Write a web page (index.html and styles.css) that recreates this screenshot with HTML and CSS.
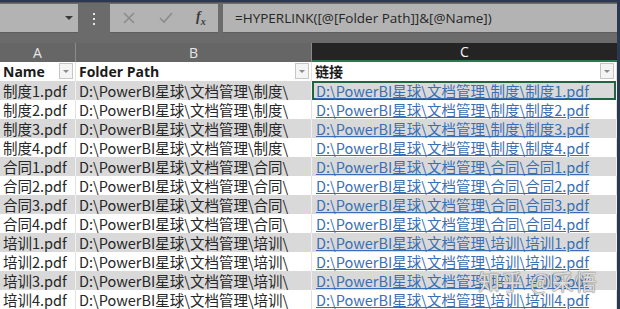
FILE: index.html
```html
<!DOCTYPE html>
<html lang="zh-CN">
<head>
    <meta charset="UTF-8">
    <title>HYPERLINK 文档链接</title>
    <link rel="stylesheet" href="styles.css">
</head>
<body>
    <div class="sheet">
        <div class="window-edge"></div>

        <div class="formula-bar">
            <div class="name-box"><span class="caret"></span></div>
            <div class="grip"><i></i><i></i><i></i></div>
            <div class="fx-buttons">
                <svg class="btn-icon" width="14" height="14" viewBox="0 0 14 14"><path d="M2 2 L12 12 M12 2 L2 12" stroke="#8c8c8c" stroke-width="1.6" fill="none"/></svg>
                <svg class="btn-icon" width="16" height="14" viewBox="0 0 16 14"><path d="M2 7 L6 11 L14 2" stroke="#8c8c8c" stroke-width="1.6" fill="none"/></svg>
                <span class="fx">f<sub>x</sub></span>
            </div>
            <div class="formula-input">=HYPERLINK([@[Folder Path]]&amp;[@Name])</div>
        </div>

        <div class="col-heads">
            <div class="col-head">A</div>
            <div class="col-head">B</div>
            <div class="col-head active">C</div>
        </div>

        <div class="table">
            <div class="row head">
                <div class="cell">Name<span class="filter"></span></div>
                <div class="cell">Folder Path<span class="filter"></span></div>
                <div class="cell">链接<span class="filter"></span></div>
            </div>
            <div class="row band">
                <div class="cell">制度1.pdf</div>
                <div class="cell">D:\PowerBI星球\文档管理\制度\</div>
                <div class="cell link selected"><a>D:\PowerBI星球\文档管理\制度\制度1.pdf</a></div>
            </div>
            <div class="row">
                <div class="cell">制度2.pdf</div>
                <div class="cell">D:\PowerBI星球\文档管理\制度\</div>
                <div class="cell link"><a>D:\PowerBI星球\文档管理\制度\制度2.pdf</a></div>
            </div>
            <div class="row band">
                <div class="cell">制度3.pdf</div>
                <div class="cell">D:\PowerBI星球\文档管理\制度\</div>
                <div class="cell link"><a>D:\PowerBI星球\文档管理\制度\制度3.pdf</a></div>
            </div>
            <div class="row">
                <div class="cell">制度4.pdf</div>
                <div class="cell">D:\PowerBI星球\文档管理\制度\</div>
                <div class="cell link"><a>D:\PowerBI星球\文档管理\制度\制度4.pdf</a></div>
            </div>
            <div class="row band">
                <div class="cell">合同1.pdf</div>
                <div class="cell">D:\PowerBI星球\文档管理\合同\</div>
                <div class="cell link"><a>D:\PowerBI星球\文档管理\合同\合同1.pdf</a></div>
            </div>
            <div class="row">
                <div class="cell">合同2.pdf</div>
                <div class="cell">D:\PowerBI星球\文档管理\合同\</div>
                <div class="cell link"><a>D:\PowerBI星球\文档管理\合同\合同2.pdf</a></div>
            </div>
            <div class="row band">
                <div class="cell">合同3.pdf</div>
                <div class="cell">D:\PowerBI星球\文档管理\合同\</div>
                <div class="cell link"><a>D:\PowerBI星球\文档管理\合同\合同3.pdf</a></div>
            </div>
            <div class="row">
                <div class="cell">合同4.pdf</div>
                <div class="cell">D:\PowerBI星球\文档管理\合同\</div>
                <div class="cell link"><a>D:\PowerBI星球\文档管理\合同\合同4.pdf</a></div>
            </div>
            <div class="row band">
                <div class="cell">培训1.pdf</div>
                <div class="cell">D:\PowerBI星球\文档管理\培训\</div>
                <div class="cell link"><a>D:\PowerBI星球\文档管理\培训\培训1.pdf</a></div>
            </div>
            <div class="row">
                <div class="cell">培训2.pdf</div>
                <div class="cell">D:\PowerBI星球\文档管理\培训\</div>
                <div class="cell link"><a>D:\PowerBI星球\文档管理\培训\培训2.pdf</a></div>
            </div>
            <div class="row band">
                <div class="cell">培训3.pdf</div>
                <div class="cell">D:\PowerBI星球\文档管理\培训\</div>
                <div class="cell link"><a>D:\PowerBI星球\文档管理\培训\培训3.pdf</a></div>
            </div>
            <div class="row">
                <div class="cell">培训4.pdf</div>
                <div class="cell">D:\PowerBI星球\文档管理\培训\</div>
                <div class="cell link"><a>D:\PowerBI星球\文档管理\培训\培训4.pdf</a></div>
            </div>
        </div>

        <div class="watermark">知乎 @采悟</div>
    </div>
</body>
</html>
```

FILE: styles.css
```css
body {
    margin: 0;
    background: #ffffff;
    font-family: "Noto Sans CJK SC", "Noto Sans", sans-serif;
}

.sheet {
    position: relative;
    width: 620px;
    height: 309px;
    overflow: hidden;
    background: #ffffff;
    border-right: 3px solid #2b3950;
    box-sizing: border-box;
}

.window-edge {
    height: 2px;
    background: #2b3950;
    border-bottom: 1px solid #5a5550;
}

.formula-bar {
    display: flex;
    align-items: flex-start;
    height: 40px;
    padding-top: 1px;
    box-sizing: border-box;
    background: #6b6b6b;
}

.name-box,
.fx-buttons,
.formula-input {
    height: 29px;
    box-sizing: border-box;
    background: #b3b3b3;
    border-bottom: 1px solid #5e5e5e;
}

.name-box {
    width: 78px;
    display: flex;
    align-items: center;
    justify-content: flex-end;
    padding-right: 5px;
}

.caret {
    width: 0;
    height: 0;
    border-left: 4px solid transparent;
    border-right: 4px solid transparent;
    border-top: 4px solid #3a3a3a;
}

.grip {
    width: 32px;
    height: 29px;
    display: flex;
    flex-direction: column;
    align-items: center;
    justify-content: center;
    gap: 3px;
}

.grip i {
    width: 2px;
    height: 2px;
    background: #e6e6e6;
}

.fx-buttons {
    width: 108px;
    display: flex;
    align-items: center;
    gap: 22px;
    padding-left: 12px;
}

.fx {
    font-family: "Liberation Serif", serif;
    font-style: italic;
    font-weight: bold;
    font-size: 14px;
    color: #3a3a3a;
}

.fx sub {
    font-size: 10px;
}

.formula-input {
    flex: 1;
    margin-left: 5px;
    padding-left: 12px;
    font-family: "Open Sans", sans-serif;
    font-size: 13.5px;
    line-height: 28px;
    color: #262626;
}

.col-heads {
    display: grid;
    grid-template-columns: 76px 236px 1fr;
    height: 19px;
    background: #666666;
}

.col-head {
    text-align: center;
    font-family: "Open Sans", sans-serif;
    font-size: 14px;
    line-height: 19px;
    color: #e6e6e6;
    border-right: 1px solid #8a8a8a;
}

.col-head.active {
    background: #242424;
    color: #f5f5f5;
    border-bottom: 2px solid #2a7a4f;
    border-right: none;
    line-height: 17px;
}

.row {
    display: grid;
    grid-template-columns: 76px 236px 1fr;
    height: 19px;
}

.row.band {
    background: #d9d9d9;
}

.cell {
    position: relative;
    padding-left: 3px;
    font-size: 14.5px;
    line-height: 19px;
    color: #262626;
    white-space: nowrap;
    overflow: hidden;
    border-right: 1px solid #e2e2e2;
}

.row.band .cell {
    border-right-color: #f0f0f0;
}

.row.head .cell {
    font-family: "Open Sans", "Noto Sans CJK SC", sans-serif;
    font-weight: bold;
    font-size: 14px;
    color: #1a1a1a;
}

.filter {
    position: absolute;
    right: 2px;
    top: 1px;
    width: 14px;
    height: 16px;
    box-sizing: border-box;
    background: #f4f4f4;
    border: 1px solid #c6c6c6;
}

.filter::after {
    content: "";
    position: absolute;
    left: 3px;
    top: 6px;
    border-left: 3px solid transparent;
    border-right: 3px solid transparent;
    border-top: 3px solid #8a8a8a;
}

.cell.link {
    padding-left: 4px;
}

.cell.link a {
    color: #3a6fb4;
    text-decoration: underline;
}

.cell.selected {
    box-shadow: inset 0 0 0 2px #22643f;
}

.watermark {
    position: absolute;
    left: 478px;
    top: 264px;
    font-size: 22px;
    color: rgba(255, 255, 255, 0.8);
    text-shadow: 0 0 1px #666666, 0 0 1px #666666;
    letter-spacing: 1px;
}
```
